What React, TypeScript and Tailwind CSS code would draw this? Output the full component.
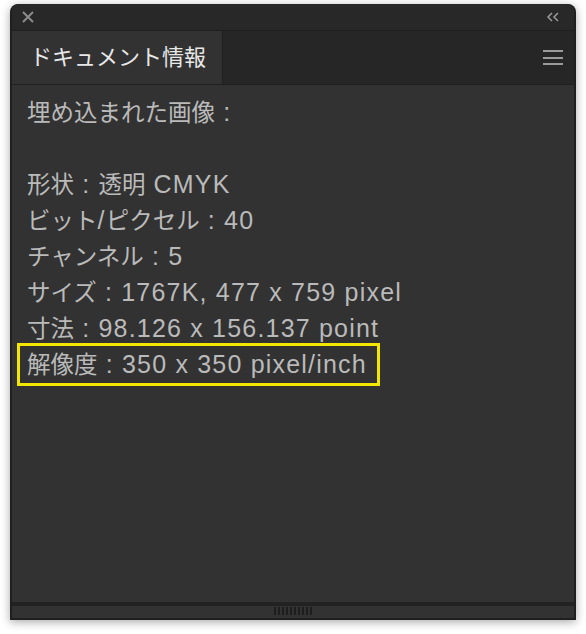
import React from "react";

// 情報パネルの各行
const rows: (string | null)[] = [
  "埋め込まれた画像 :",
  null,
  "形状 : 透明 CMYK",
  "ビット/ピクセル : 40",
  "チャンネル : 5",
  "サイズ : 1767K, 477 x 759 pixel",
  "寸法 : 98.126 x 156.137 point",
];

// 和文と欧文でサイズを分ける（欧文は大きめ）
function Mixed({ text }: { text: string }) {
  const parts = text.split(/([\u3040-\u30ff\u3400-\u9fff\uff00-\uffef]+)/);
  return (
    <>
      {parts.map((p, i) =>
        /[\u3040-\u30ff\u3400-\u9fff\uff00-\uffef]/.test(p) ? (
          <span key={i} className="text-[23.5px] tracking-normal">
            {p}
          </span>
        ) : (
          <span key={i}>{p}</span>
        )
      )}
    </>
  );
}

export default function App() {
  return (
    <div
      className="w-[586px] h-[634px] bg-white pt-[4px] pl-[10px]"
      style={{ fontFamily: '"Liberation Sans", "Noto Sans CJK JP", sans-serif' }}
    >
      <div className="w-[566px] h-[616px] flex flex-col rounded-t-[8px] bg-[#1f1f1f] px-[2px] pb-[2px] shadow-[0_2px_10px_rgba(0,0,0,0.35)]">
        {/* タイトルバー */}
        <div className="h-[27px] flex items-center justify-between pl-[10px] pr-[14px] bg-[#282828] rounded-t-[7px] border-b border-[#1f1f1f]">
          <svg width="12" height="12" viewBox="0 0 12 12">
            <path d="M1 1 L11 11 M11 1 L1 11" stroke="#8c8c8c" strokeWidth="2" />
          </svg>
          <svg width="14" height="10" viewBox="0 0 14 10">
            <path d="M6 1 L2 5 L6 9 M12 1 L8 5 L12 9" stroke="#9a9a9a" strokeWidth="1.5" fill="none" />
          </svg>
        </div>

        {/* タブ行 */}
        <div className="h-[54px] flex bg-[#262626] border-b border-[#1f1f1f]">
          <div className="w-[210px] h-full bg-[#323232] flex items-center pl-[18px] text-[22px] text-[#e8e8e8]">
            ドキュメント情報
          </div>
          <div className="flex-1 flex items-center justify-end pr-[11px] border-l border-[#1f1f1f]">
            <div className="flex flex-col gap-[4.5px]">
              <div className="w-[20px] h-[2px] bg-[#9a9a9a]" />
              <div className="w-[20px] h-[2px] bg-[#9a9a9a]" />
              <div className="w-[20px] h-[2px] bg-[#9a9a9a]" />
            </div>
          </div>
        </div>

        {/* 内容 */}
        <div className="flex-1 bg-[#323232] pt-[9px] pl-[15px] text-[25px] tracking-[1.2px] text-[#bababa]">
          {rows.map((r, i) => (
            <div key={i} className="h-[36px] leading-[36px] whitespace-nowrap">
              {r ? <Mixed text={r} /> : ""}
            </div>
          ))}
          <div className="relative h-[36px] leading-[36px] whitespace-nowrap">
            <Mixed text="解像度 : 350 x 350 pixel/inch" />
            <div className="absolute left-[-10px] top-[-3px] w-[363px] h-[43px] border-[3px] border-[#f3e600]" />
          </div>
        </div>

        {/* 下部グリップ */}
        <div className="h-[4px] bg-[#222222]" />
        <div className="h-[12px] bg-[#323232] flex justify-center pt-[1px]">
          <div className="flex gap-[2px]">
            {Array.from({ length: 10 }).map((_, i) => (
              <div key={i} className="w-[2px] h-[8px] bg-[#1e1e1e]" />
            ))}
          </div>
        </div>
      </div>
    </div>
  );
}
